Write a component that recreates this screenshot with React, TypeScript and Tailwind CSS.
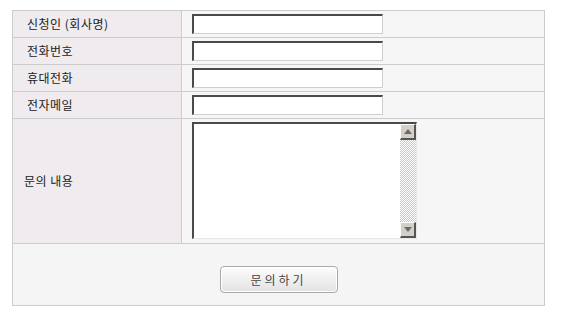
import React from 'react';

const font = { fontFamily: '"Noto Sans CJK KR", "Noto Sans", sans-serif' };

function Field() {
  return (
    <input
      type="text"
      className="w-[191px] h-[20px] bg-white border-t-2 border-l-2 border-r border-b border-t-[#4a4a4a] border-l-[#4a4a4a] border-r-[#cfcfcf] border-b-[#cfcfcf] outline-none px-1 text-[12px]"
    />
  );
}

function Row({ label, pad = 'pl-[14px]' }: { label: string; pad?: string }) {
  return (
    <div className="flex h-[27px] border-b border-[#cccccc]">
      <div className={`w-[169px] shrink-0 border-r border-[#cccccc] bg-[#efebee] flex items-center ${pad} text-[12px] tracking-[0.5px] text-[#222]`}>
        {label}
      </div>
      <div className="flex-1 bg-[#f6f6f6] flex items-center pl-[10px]">
        <Field />
      </div>
    </div>
  );
}

function ArrowButton({ up }: { up: boolean }) {
  return (
    <div className="w-[16px] h-[16px] bg-[#d4d0c8] border-t border-l border-t-white border-l-white border-r-2 border-b-2 border-r-[#555] border-b-[#555] flex items-center justify-center">
      <svg width="8" height="5" viewBox="0 0 8 5">
        {up ? <polygon points="0,5 8,5 4,0" fill="#6b6b6b" /> : <polygon points="0,0 8,0 4,5" fill="#6b6b6b" />}
      </svg>
    </div>
  );
}

export default function App() {
  return (
    <div className="w-[564px] h-[320px] bg-white pt-[10px] pl-[12px]" style={font}>
      <div className="w-[533px] border border-[#cccccc]">
        <Row label="신청인 (회사명)" />
        <Row label="전화번호" />
        <Row label="휴대전화" />
        <Row label="전자메일" />

        {/* 문의 내용 */}
        <div className="flex h-[125px] border-b border-[#cccccc]">
          <div className="w-[169px] shrink-0 border-r border-[#cccccc] bg-[#efebee] flex items-center pl-[11px] text-[12px] tracking-[0.5px] text-[#222]">
            문의 내용
          </div>
          <div className="flex-1 bg-[#f6f6f6] pl-[10px] pt-[3px]">
            <div className="flex w-[225px] h-[117px] bg-white border-t-2 border-l-2 border-r border-b border-t-[#4a4a4a] border-l-[#4a4a4a] border-r-[#e8e8e8] border-b-[#e8e8e8]">
              <textarea className="flex-1 resize-none outline-none bg-white text-[12px] p-1" />
              <div className="w-[16px] flex flex-col bg-[repeating-conic-gradient(#c8c8c8_0_25%,#ffffff_0_50%)] bg-[length:2px_2px]">
                <ArrowButton up />
                <div className="flex-1" />
                <ArrowButton up={false} />
              </div>
            </div>
          </div>
        </div>

        {/* 버튼 */}
        <div className="h-[61px] bg-[#f5f5f5] flex items-start justify-center pt-[22px]">
          <button className="w-[118px] h-[27px] rounded-[4px] border border-[#a9a9a9] bg-gradient-to-b from-[#fdfdfd] to-[#e4e2e4] text-[12px] text-[#444] tracking-[3px] shadow-[inset_0_0_0_1px_#ffffff]">
            문의하기
          </button>
        </div>
      </div>
    </div>
  );
}
